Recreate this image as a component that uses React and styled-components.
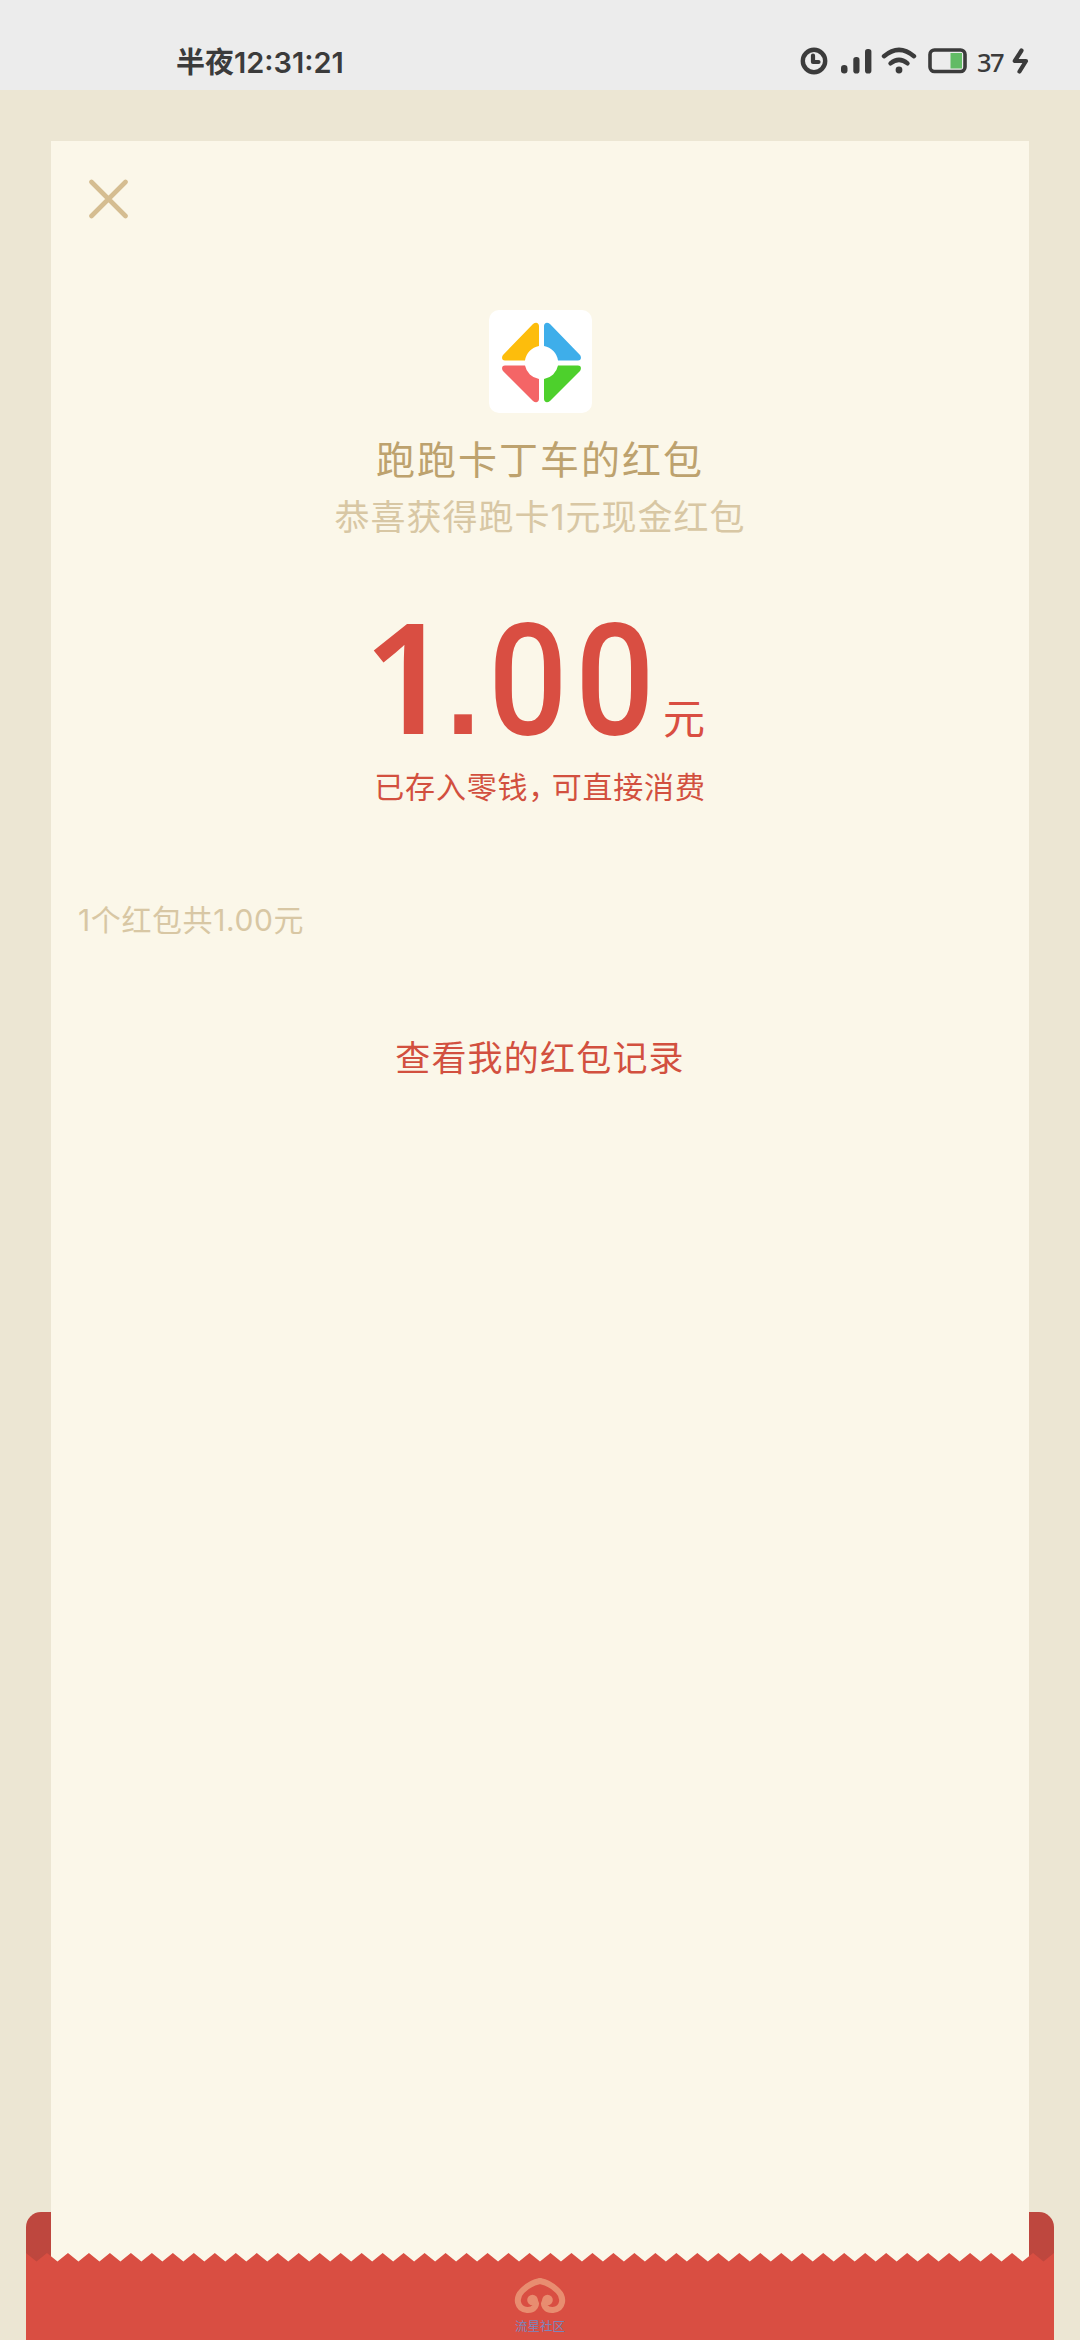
import React from 'react'
import styled, { createGlobalStyle } from 'styled-components'

const GlobalStyle = createGlobalStyle`
* {
    box-sizing: border-box;
}
body {
    margin: 0;
    background: #ece6d3;
    font-family: Inter, "Noto Sans CJK SC", sans-serif;
}
`

const Page = styled.div`
display: flex;
flex-direction: column;
width: 1080px;
height: 2340px;
overflow: hidden;
`

const StatusBar = styled.header`
display: flex;
justify-content: space-between;
height: 90px;
padding: 35px 51px 0 176px;
background: #ececec;
color: #3b3b3b;
`

const Clock = styled.div`
margin-top: 1px;
font-size: 29px;
font-weight: 600;
line-height: 54px;
height: 54px;
`

const StatusIcons = styled.div`
display: flex;
align-items: center;
height: 51px;
`

const Icon = styled.svg`
display: block;
flex: none;
margin-left: ${p => p.$gap || 0}px;
`

const Percent = styled.span`
width: 27px;
margin: 2px 8px 0 9px;
font: 500 25.5px "Noto Sans", sans-serif;
line-height: 30px;
letter-spacing: -1.5px;
`

const Stage = styled.main`
position: relative;
flex: 1;
padding: 51px 51px 0;
`

const Paper = styled.section`
position: relative;
display: flex;
flex-direction: column;
align-items: center;
height: 2125px;
background: #fbf7e9;
`

const CloseButton = styled.button`
align-self: flex-start;
display: block;
width: 40px;
height: 40px;
margin: 38px 0 0 37px;
padding: 0;
border: 0;
background: none;
`

const Avatar = styled.div`
width: 103px;
height: 103px;
margin-top: 91px;
border-radius: 10px;
background: #fff;
`

const Text = styled.p`
margin: ${p => p.$top}px 0 0;
font-size: ${p => p.$size}px;
line-height: ${p => p.$line}px;
letter-spacing: ${p => p.$spacing}px;
color: ${p => p.$color};
white-space: nowrap;
`

const Comma = styled.span`
letter-spacing: -6.6px;
`

const Amount = styled.div`
display: flex;
align-items: baseline;
height: 150px;
margin-top: 51px;
line-height: 150px;
color: #d94e42;
`

const One = styled.span`
width: 74.5px;
margin-left: -12px;
font-family: "Noto Sans", sans-serif;
font-size: 154px;
font-weight: 570;
`

const Dot = styled.span`
width: 46.5px;
font-family: "Liberation Sans", sans-serif;
font-size: 184px;
`

const Zero = styled.span`
width: 87px;
font-family: Roboto, sans-serif;
font-size: 155px;
font-weight: 500;
text-align: center;
transform: scaleX(0.9);
`

const Unit = styled.span`
margin-left: 5px;
font-size: 42px;
`

const Count = styled(Text)`
align-self: flex-start;
margin-left: 27px;
`

const EnvelopeBack = styled.div`
position: absolute;
left: 26px;
right: 26px;
bottom: 0;
height: 128px;
border-radius: 15px 15px 0 0;
background: #be473e;
`

const EnvelopeFront = styled.footer`
position: absolute;
left: 26px;
right: 26px;
bottom: 0;
height: 87px;
display: flex;
flex-direction: column;
align-items: center;
`

const Teeth = styled.svg`
position: absolute;
left: 0;
top: 0;
`

const Brand = styled.div`
position: relative;
display: flex;
flex-direction: column;
align-items: center;
padding-top: 24px;
`

const BrandName = styled.span`
margin-top: 4px;
font-size: 12.5px;
line-height: 18px;
color: #7b85bd;
`

// front flap outline: 49 teeth across the whole width
const TEETH = 49
const step = 1028 / TEETH
let flap = 'M0 0'
for (let i = 0; i < TEETH; i++) {
    flap += `L${(i + 0.5) * step} 8.5L${(i + 1) * step} 0`
}
flap += 'V87H0Z'

function StatusBarIcons() {
    return (
        <StatusIcons>
            <Icon width="28" height="28" viewBox="0 0 28 28" fill="none" stroke="currentColor">
                <circle cx="14" cy="14" r="11.2" strokeWidth="4.4" />
                <path d="M13 8.5V15H18.5" strokeWidth="4.2" strokeLinecap="round" strokeLinejoin="round" />
            </Icon>
            <Icon $gap={13} width="32" height="28" viewBox="0 0 32 28" fill="currentColor">
                <rect x="0" y="18" width="6.5" height="8.5" rx="3.2" />
                <rect x="12.3" y="10" width="6.2" height="16.5" rx="2.8" />
                <rect x="24" y="2" width="6.4" height="24.5" rx="2.8" />
            </Icon>
            <Icon $gap={8} width="36" height="28" viewBox="0 0 36 28" fill="none" stroke="currentColor" strokeLinecap="round">
                <path d="M3 9.2Q18 -3.5 33 9.2" strokeWidth="4.4" />
                <path d="M9.5 16.4Q18 9.3 26.5 16.4" strokeWidth="4.4" />
                <circle cx="18" cy="23" r="3.4" fill="currentColor" stroke="none" />
            </Icon>
            <Icon $gap={11} width="40" height="26" viewBox="0 0 40 26">
                <rect x="2" y="2" width="35" height="21.5" rx="4.5" fill="none" stroke="currentColor" strokeWidth="3.6" />
                <rect x="22.5" y="5" width="11.5" height="15.5" fill="#62bb65" />
            </Icon>
            <Percent>37</Percent>
            <Icon width="17" height="26" viewBox="0 0 17 26">
                <path d="M9.5 2.5L2.8 13H14L7.5 23.5" fill="none" stroke="currentColor" strokeWidth="4.2" strokeLinecap="round" strokeLinejoin="round" />
            </Icon>
        </StatusIcons>
    )
}

function Logo() {
    return (
        <svg width="103" height="103" viewBox="0 0 103 103">
            <path d="M44 14C47 11.500 50 13 50 16V36A17 17 0 0 0 36 50.500H16C12.500 50.500 12.500 47 14 45Z" fill="#fdbd0c" />
            <path d="M61 14C58 11.500 55 13 55 16V36A17 17 0 0 1 69 50.500H89C92.500 50.500 92.500 47 91 45Z" fill="#3eaeea" />
            <path d="M44 91C47 93.500 50 92 50 89V69A17 17 0 0 1 36 55.500H16C12.500 55.500 12.500 59 14 61Z" fill="#f46566" />
            <path d="M61 91C58 93.500 55 92 55 89V69A17 17 0 0 0 69 55.500H89C92.500 55.500 92.500 59 91 61Z" fill="#4dd02c" />
        </svg>
    )
}

function App() {
    return (
        <Page>
            <GlobalStyle />
            <StatusBar>
                <Clock>半夜12:31:21</Clock>
                <StatusBarIcons />
            </StatusBar>
            <Stage>
                <EnvelopeBack />
                <Paper>
                    <CloseButton aria-label="关闭">
                        <svg width="40" height="40" viewBox="0 0 40 40" stroke="#d5bd91" strokeWidth="4.600" strokeLinecap="round">
                            <path d="M3.500 3L37.500 37M37.500 3L3.500 37" />
                        </svg>
                    </CloseButton>
                    <Avatar>
                        <Logo />
                    </Avatar>
                    <Text $top={17} $size={39} $line={60} $spacing={2} $color="#bda26e">跑跑卡丁车的红包</Text>
                    <Text $top={0} $size={35} $line={54} $spacing={1} $color="#d8c7a4">恭喜获得跑卡1元现金红包</Text>
                    <Amount>
                        <One>1</One>
                        <Dot>.</Dot>
                        <Zero>0</Zero>
                        <Zero>0</Zero>
                        <Unit>元</Unit>
                    </Amount>
                    <Text $top={19} $size={30} $line={46} $spacing={0.8} $color="#d2503f">
                        已存入零钱<Comma>，</Comma>可直接消费
                    </Text>
                    <Count $top={87} $size={30} $line={46} $spacing={0.6} $color="#d8c7a4">1个红包共1.00元</Count>
                    <Text $top={88} $size={35} $line={54} $spacing={1.2} $color="#d2503f">查看我的红包记录</Text>
                </Paper>
                <EnvelopeFront>
                    <Teeth width="1028" height="87" viewBox="0 0 1028 87">
                        <path d={flap} fill="#d94e42" />
                    </Teeth>
                    <Brand>
                        <svg width="52" height="37" viewBox="0 0 52 37" fill="none" stroke="#e88d70" strokeWidth="6" strokeLinecap="round">
                            <path d="M26 4C20 5 13 9 8 14C1 21 3 32 13 33C20 33.500 25 27 20 23" />
                            <path d="M26 4C32 5 39 9 44 14C51 21 49 32 39 33C32 33.500 27 27 32 23" />
                            <circle cx="18.500" cy="23" r="5.300" fill="#e88d70" stroke="none" />
                            <circle cx="33.500" cy="23" r="5.300" fill="#e88d70" stroke="none" />
                        </svg>
                        <BrandName>流星社区</BrandName>
                    </Brand>
                </EnvelopeFront>
            </Stage>
        </Page>
    )
}

export default App
